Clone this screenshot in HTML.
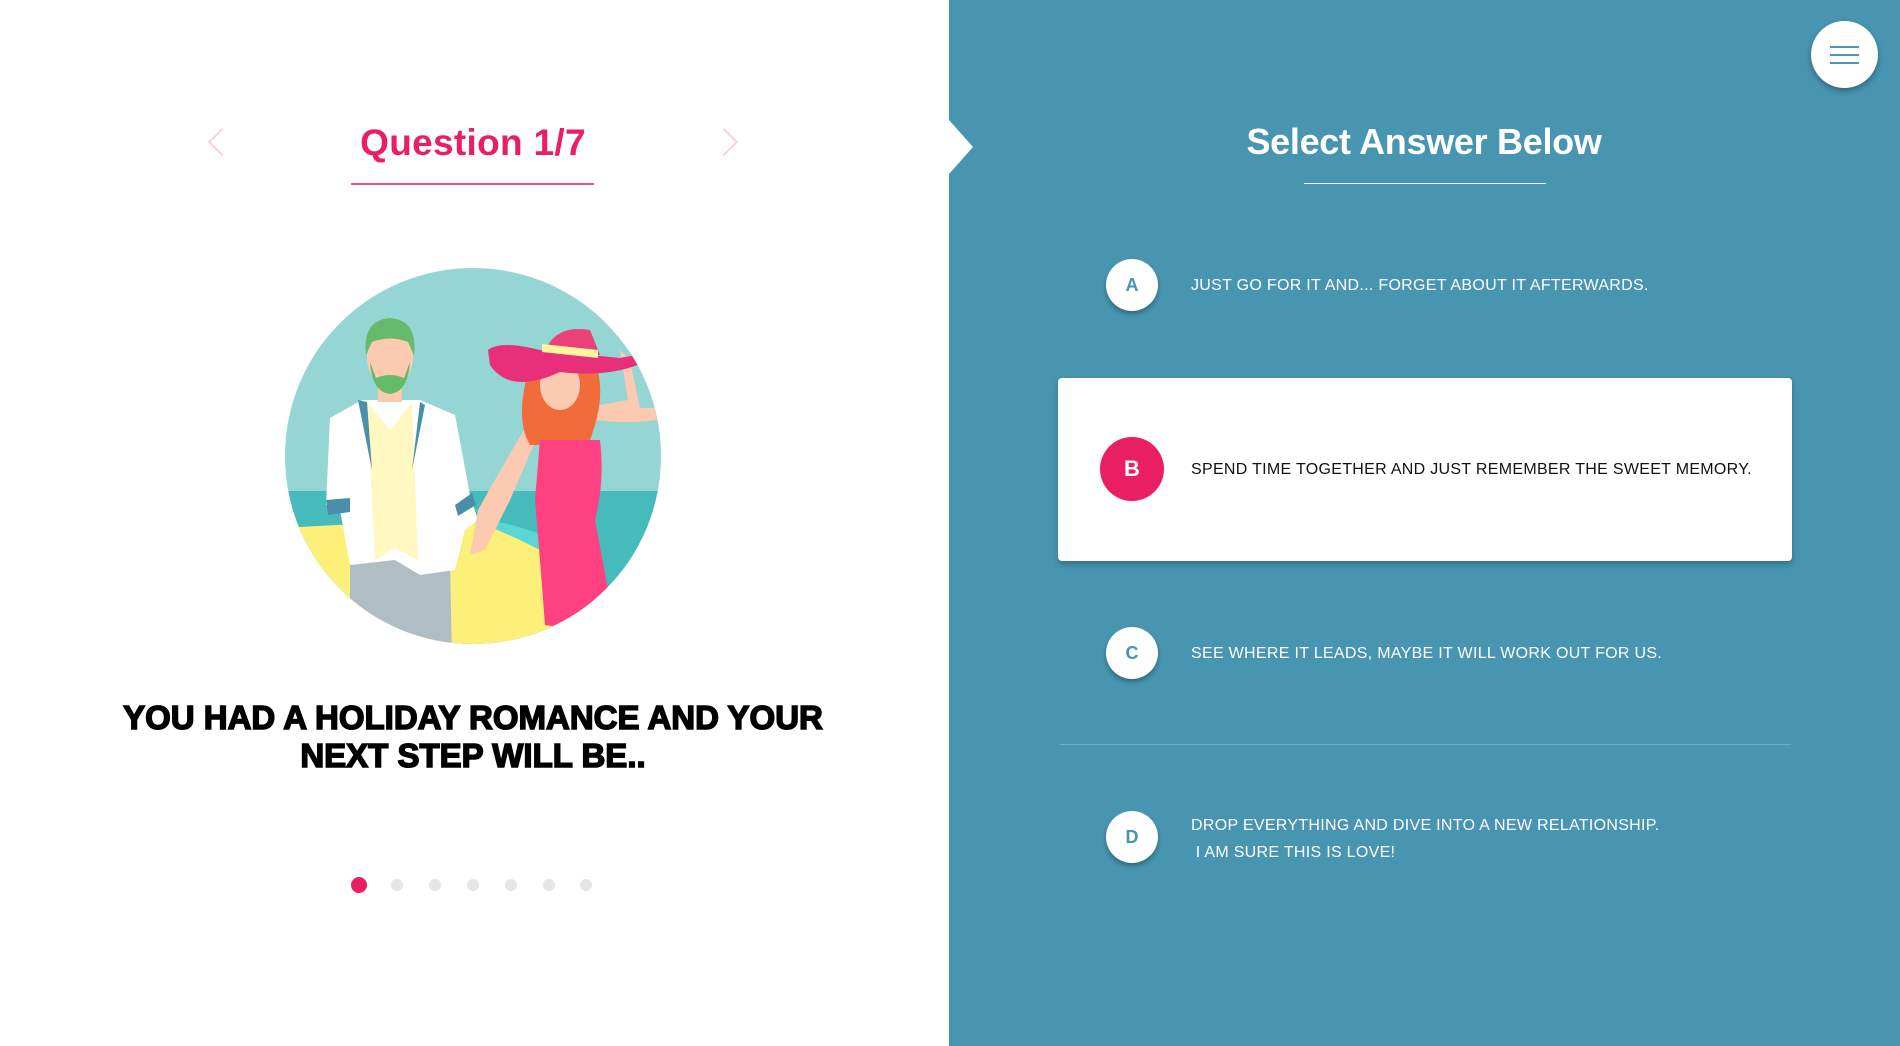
<!DOCTYPE html>
<html><head><meta charset="utf-8"><style>
*{margin:0;padding:0;box-sizing:border-box}
html,body{width:1900px;height:1046px;overflow:hidden;background:#fff;font-family:"Liberation Sans",sans-serif}
.abs{position:absolute}
#right{left:949px;top:0;width:951px;height:1046px;background:#4795b0}
.q{left:223px;width:500px;top:122px;text-align:center;color:#e91e63;font-size:37px;font-weight:bold;letter-spacing:0.3px}
.qline{left:351px;top:183px;width:243px;height:2px;background:#f0508a}
.chev{width:20px;height:20px;border-left:2px solid #fad0dc;border-bottom:2px solid #fad0dc}
.title{left:60px;width:826px;top:699px;text-align:center;font-size:33px;font-weight:bold;line-height:38px;color:#000;-webkit-text-stroke:1.5px #000;letter-spacing:0px}
.dot{width:12px;height:12px;border-radius:50%;background:#e6e6e6;top:879px}
.sel{left:1124px;width:600px;top:121px;text-align:center;color:#fff;font-size:36px;font-weight:bold;letter-spacing:-0.3px}
.sline{left:1304px;top:183px;width:242px;height:1px;background:#fff}
.circ{width:52px;height:52px;border-radius:50%;background:#fff;color:#4795b0;font-weight:bold;font-size:18px;text-align:center;line-height:52px;box-shadow:0 3px 5px rgba(0,0,0,.3)}
.opt{left:1191px;color:#fff;font-size:16px;letter-spacing:0.3px}
</style></head><body>
<div class="abs q">Question 1/7</div>
<div class="abs qline"></div>
<div class="abs chev" style="left:212px;top:132px;transform:rotate(45deg)"></div>
<div class="abs chev" style="left:714px;top:132px;transform:rotate(-135deg)"></div>

<svg class="abs" style="left:0;top:0" width="949" height="1046">
<defs><clipPath id="c"><circle cx="473" cy="456" r="188"/></clipPath></defs>
<g clip-path="url(#c)">
<rect x="280" y="260" width="400" height="400" fill="#95d5d4"/>
<rect x="280" y="491" width="400" height="180" fill="#45bcbb"/>
<path d="M280 528 L470 518 Q520 530 560 560 L600 600 L640 650 L280 660Z" fill="#fdf07a"/>
<path d="M470 518 Q540 525 590 560 L600 580 Q560 560 520 540Z" fill="#5ad6d4"/>
<!-- man -->
<path d="M350 560 L450 560 L452 660 L350 660Z" fill="#b0bdc4"/>
<path d="M330 418 L362 400 L420 400 L455 415 L470 495 L478 520 L465 530 L455 570 L420 575 L395 560 L350 565 L340 510 L326 505Z" fill="#fff"/>
<path d="M367 402 L390 430 L412 402 L418 560 L395 548 L375 560Z" fill="#fff8c0"/>
<path d="M358 400 L372 470 L367 402Z M420 402 L412 470 L425 405Z" fill="#4a8fa8"/>
<path d="M326 500 L350 498 L350 512 L328 515Z M455 505 L472 493 L476 505 L458 516Z" fill="#4a8fa8"/>
<rect x="378" y="380" width="24" height="22" fill="#fccab0"/>
<ellipse cx="390" cy="358" rx="23" ry="28" fill="#fccab0"/>
<path d="M366 355 Q362 320 390 318 Q418 320 414 355 L408 342 Q390 335 372 342Z" fill="#66bb6a"/>
<path d="M370 362 Q372 392 390 394 Q408 392 410 362 L404 378 Q390 372 376 378Z" fill="#66bb6a"/>
<!-- woman -->
<path d="M478 510 Q500 470 530 420 L540 430 L510 500 L485 550 L470 555Z" fill="#fccab0"/>
<path d="M595 420 Q630 425 668 418 L668 408 L640 408 L630 360 L620 350 L628 400 L600 405Z" fill="#fccab0"/>
<path d="M528 372 Q515 420 530 445 L545 445 L590 440 Q605 400 598 372Z" fill="#f26b3a"/>
<ellipse cx="560" cy="385" rx="20" ry="25" fill="#fccab0"/>
<path d="M540 440 L600 440 Q605 480 595 520 L610 600 L580 630 L545 625 L540 560 L535 500Z" fill="#ff4081"/>
<path d="M548 345 Q560 325 590 330 L600 355 L545 355Z" fill="#ec407a"/>
<path d="M488 350 Q500 340 540 350 L620 358 Q648 352 645 362 Q610 378 560 372 Q510 395 490 365Z" fill="#e8307a"/>
<path d="M542 344 L598 350 L598 358 L542 352Z" fill="#fff59d"/>
</g>
</svg>

<div class="abs title">YOU HAD A HOLIDAY ROMANCE AND YOUR<br>NEXT STEP WILL BE..</div>
<div class="abs dot" style="left:351px;top:877px;width:16px;height:16px;background:#e91e63"></div>
<div class="abs dot" style="left:391px"></div>
<div class="abs dot" style="left:429px"></div>
<div class="abs dot" style="left:467px"></div>
<div class="abs dot" style="left:505px"></div>
<div class="abs dot" style="left:543px"></div>
<div class="abs dot" style="left:580px"></div>

<div class="abs" id="right"></div>
<svg class="abs" style="left:949px;top:120px" width="26" height="54"><path d="M0 0 L24 27 L0 54Z" fill="#fff"/></svg>
<div class="abs" style="left:1811px;top:21px;width:67px;height:67px;border-radius:50%;background:#fff;box-shadow:0 3px 6px rgba(0,0,0,.3)"></div>
<div class="abs" style="left:1830px;top:46px;width:29px;height:2px;background:#4795b0;box-shadow:0 8px 0 #4795b0,0 16px 0 #4795b0"></div>

<div class="abs sel">Select Answer Below</div>
<div class="abs sline"></div>

<div class="abs circ" style="left:1106px;top:259px">A</div>
<div class="abs opt" style="top:277px">JUST GO FOR IT AND... FORGET ABOUT IT AFTERWARDS.</div>

<div class="abs" style="left:1058px;top:378px;width:734px;height:183px;background:#fff;border-radius:4px;box-shadow:0 3px 6px rgba(0,0,0,.25)"></div>
<div class="abs circ" style="left:1100px;top:437px;width:64px;height:64px;line-height:64px;background:#e91e63;color:#fff;font-size:22px;box-shadow:none">B</div>
<div class="abs opt" style="top:461px;color:#111">SPEND TIME TOGETHER AND JUST REMEMBER THE SWEET MEMORY.</div>

<div class="abs circ" style="left:1106px;top:627px">C</div>
<div class="abs opt" style="top:645px">SEE WHERE IT LEADS, MAYBE IT WILL WORK OUT FOR US.</div>

<div class="abs" style="left:1060px;top:744px;width:731px;height:1px;background:#6aaec4"></div>

<div class="abs circ" style="left:1106px;top:811px">D</div>
<div class="abs opt" style="top:812px;line-height:27px">DROP EVERYTHING AND DIVE INTO A NEW RELATIONSHIP.<br>&nbsp;I AM SURE THIS IS LOVE!</div>
</body></html>
